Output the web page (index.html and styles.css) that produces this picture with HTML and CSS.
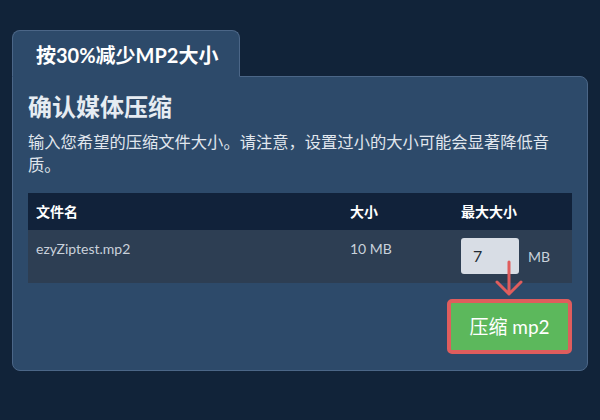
FILE: index.html
```html
<!DOCTYPE html>
<html lang="zh">
<head>
<meta charset="utf-8">
<link rel="stylesheet" href="styles.css">
</head>
<body>
<div class="wrap">
  <div class="tab">按30%减少MP2大小</div>
  <div class="panel">
    <h2 class="title">确认媒体压缩</h2>
    <p class="desc">输入您希望的压缩文件大小。请注意，设置过小的大小可能会显著降低音质。</p>
    <div class="table">
      <div class="th">文件名</div>
      <div class="th">大小</div>
      <div class="th">最大大小</div>
      <div class="td">ezyZiptest.mp2</div>
      <div class="td">10 MB</div>
      <div class="td td-input">
        <div class="input-wrap">
          <div class="input">7</div>
          <svg class="arrow" width="30" height="40" viewBox="0 0 30 40"><path d="M14 2 V34 M2 22 L14 34 L26 22" fill="none" stroke="#e05d5d" stroke-width="3" stroke-linecap="round" stroke-linejoin="round"/></svg>
        </div>
        <span class="unit">MB</span>
      </div>
    </div>
    <div class="actions">
      <div class="btn">压缩 mp2</div>
    </div>
  </div>
</div>
</body>
</html>
```
FILE: styles.css
```css
html, body {
  margin: 0;
  padding: 0;
  background: #112339;
}
body {
  font-family: Lato, "Noto Sans CJK SC", sans-serif;
  color: #e9eef4;
}
.wrap {
  padding-top: 30px;
  margin-left: 12px;
  width: 576px;
}
.tab {
  position: relative;
  z-index: 1;
  box-sizing: border-box;
  width: 228px;
  height: 47px;
  margin-bottom: -1px;
  padding: 2px 0 0 23px;
  line-height: 44px;
  font-size: 20px;
  font-weight: 700;
  color: #ffffff;
  background: #2d4a6a;
  border: 1px solid #4b6687;
  border-bottom: 1px solid #2d4a6a;
  border-radius: 8px 8px 0 0;
}
.panel {
  box-sizing: border-box;
  background: #2d4a6a;
  border: 1px solid #4b6687;
  border-radius: 0 8px 8px 8px;
  padding: 15px 15px 16px 15px;
}
.title {
  margin: 0;
  font-size: 24px;
  line-height: 30px;
  font-weight: 700;
  color: #e6ecf2;
}
.desc {
  margin: 9px 0 0 0;
  font-size: 16.3px;
  line-height: 22.5px;
  color: #e1e7ee;
}
.table {
  margin-top: 17px;
  display: grid;
  grid-template-columns: 314px 111px 119px;
}
.th {
  background: #11223a;
  height: 37px;
  line-height: 37px;
  padding-left: 8px;
  font-size: 14px;
  font-weight: 700;
  color: #ffffff;
}
.td {
  background: #2d3e53;
  height: 53px;
  box-sizing: border-box;
  padding: 9px 0 0 8px;
  font-size: 14px;
  line-height: 20px;
  color: #c9d1db;
}
.td-input {
  display: flex;
  align-items: flex-start;
  padding: 8px 0 0 8px;
  gap: 9px;
}
.input-wrap {
  position: relative;
}
.input {
  box-sizing: border-box;
  width: 58px;
  height: 36px;
  line-height: 36px;
  padding-left: 12px;
  background: #d8dde5;
  border-radius: 3px;
  font-size: 16px;
  color: #222a33;
}
.arrow {
  position: absolute;
  left: 34px;
  top: 22px;
}
.unit {
  font-size: 14px;
  line-height: 20px;
  color: #c9d1db;
  padding-top: 9px;
}
.actions {
  display: flex;
  justify-content: flex-end;
  margin-top: 16px;
}
.btn {
  box-sizing: border-box;
  height: 55px;
  width: 125px;
  text-align: center;
  line-height: 47px;
  background: #5cb85c;
  border: 4px solid #df5d5d;
  border-radius: 5px;
  font-size: 19px;
  color: #ffffff;
}
```
